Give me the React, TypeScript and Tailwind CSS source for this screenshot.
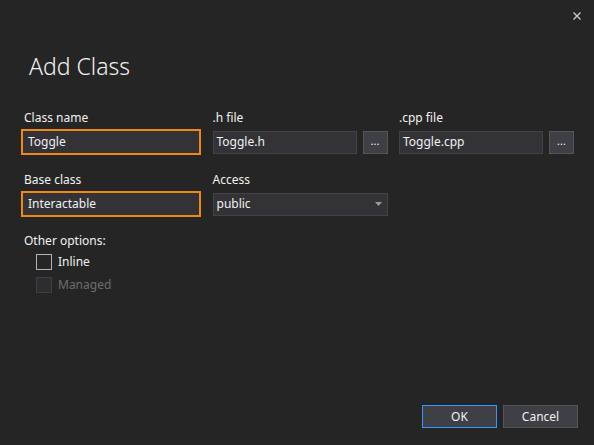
import { useState } from "react";

const font = { fontFamily: '"Segoe UI", "Noto Sans", "Open Sans", sans-serif' };

function Field({ label, value, focused, browse }: { label: string; value: string; focused?: boolean; browse?: boolean }) {
  return (
    <div className="flex flex-col">
      <div className={`h-[16px] text-[12px] leading-[16px] text-[#f1f1f1] ${focused ? "pl-[3px]" : ""}`}>{label}</div>
      <div className="mt-[3px] flex h-[26px] items-center gap-[6px]">
        {focused ? (
          <div className="flex h-[26px] w-[180px] items-center border-2 border-[#f0890c] bg-[#333337] pl-[5px] text-[12px] text-[#f1f1f1]">
            {value}
          </div>
        ) : (
          <div className="flex h-[23px] w-[144px] items-center border border-[#434346] bg-[#333337] pl-[3px] text-[12px] text-[#f1f1f1]">
            {value}
          </div>
        )}
        {browse && (
          <button className="flex h-[23px] w-[25px] items-center justify-center border border-[#555558] bg-[#3f3f46] pb-[2px] text-[11px] text-[#f1f1f1]">
            ...
          </button>
        )}
      </div>
    </div>
  );
}

export default function App() {
  const [inline, setInline] = useState(false);
  return (
    <div style={font} className="relative flex h-[445px] w-[594px] flex-col bg-[#252526] text-[#f1f1f1]">
      <button className="absolute right-[10px] top-[9px] flex h-[14px] w-[14px] items-center justify-center text-[#c8c8c8]">
        <svg width="8" height="8" viewBox="0 0 8 8">
          <path d="M0.5 0.5 L7.5 7.5 M7.5 0.5 L0.5 7.5" stroke="currentColor" strokeWidth="1.4" />
        </svg>
      </button>

      <h1 className="ml-[29px] mt-[50px] text-[23px] font-light leading-[32px]">Add Class</h1>

      <div className="ml-[21px] mt-[28px] grid grid-cols-[180px_175px_175px] gap-x-[11.5px]">
        <Field label="Class name" value="Toggle" focused />
        <Field label=".h file" value="Toggle.h" browse />
        <Field label=".cpp file" value="Toggle.cpp" browse />
      </div>

      <div className="ml-[21px] mt-[17px] grid grid-cols-[180px_175px] gap-x-[11.5px]">
        <Field label="Base class" value="Interactable" focused />
        <div className="flex flex-col">
          <div className="h-[16px] text-[12px] leading-[16px]">Access</div>
          <div className="mt-[3px] flex h-[26px] items-center">
            <div className="flex h-[23px] w-[175px] items-center justify-between border border-[#434346] bg-[#333337] pl-[3px] pr-[5px] text-[12px]">
              <span>public</span>
              <svg width="7" height="4" viewBox="0 0 7 4">
                <path d="M0 0 H7 L3.5 4 Z" fill="#999999" />
              </svg>
            </div>
          </div>
        </div>
      </div>

      <div className="ml-[24px] mt-[16px] text-[12px] leading-[16px]">Other options:</div>
      <div className="ml-[36px] mt-[5px] flex flex-col gap-[7px]">
        <label className="flex h-[16px] items-center gap-[6px] text-[12px] leading-[16px]" onClick={() => setInline(!inline)}>
          <span className="h-[16px] w-[16px] border border-[#b4b4b4] bg-[#252526]" />
          <span>Inline</span>
        </label>
        <label className="flex h-[16px] items-center gap-[6px] text-[12px] leading-[16px] text-[#6d6d6d]">
          <span className="h-[16px] w-[16px] border border-[#3f3f46] bg-[#2d2d30]" />
          <span>Managed</span>
        </label>
      </div>

      <div className="mr-[16px] mt-auto mb-[17px] flex justify-end gap-[6px]">
        <button className="h-[23px] w-[75px] border border-[#3399ff] bg-[#3f3f46] text-[12px]">OK</button>
        <button className="h-[23px] w-[75px] border border-[#555558] bg-[#3f3f46] text-[12px]">Cancel</button>
      </div>
    </div>
  );
}
